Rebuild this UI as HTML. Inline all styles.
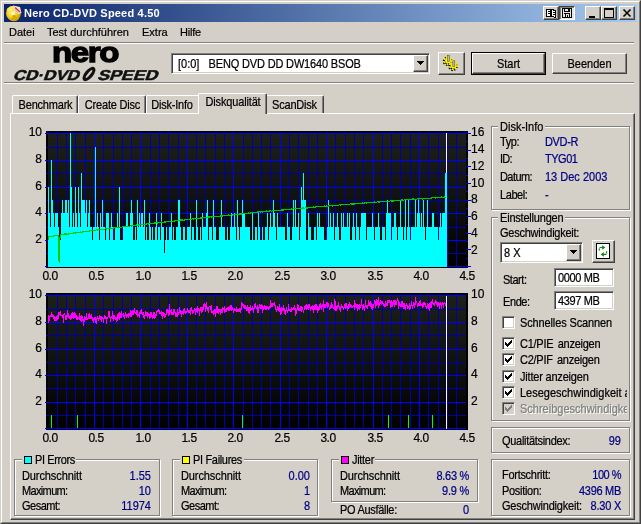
<!DOCTYPE html>
<html><head><meta charset="utf-8"><title>Nero CD-DVD Speed 4.50</title>
<style>
html,body{margin:0;padding:0;background:#d4d0c8;}
body{width:641px;height:524px;overflow:hidden;}
#win{filter:contrast(1);position:relative;width:641px;height:524px;background:#d4d0c8;overflow:hidden;
 font-family:"Liberation Sans",sans-serif;font-size:11px;color:#000;line-height:13px;}
#win *{box-sizing:border-box;}
.a{position:absolute;white-space:nowrap;}
.t{position:absolute;white-space:nowrap;height:13px;line-height:13px;}
.v{position:absolute;white-space:nowrap;height:13px;line-height:13px;color:#000080;text-align:right;}
.n{color:#000080;}
.ax{position:absolute;white-space:nowrap;height:13px;line-height:13px;font-size:12px;}
.axc{text-align:center;width:30px;letter-spacing:-0.5px;}
.axr{text-align:right;width:20px;}
/* frame */
.fr{position:absolute;}
.grp{position:absolute;border:1px solid #808080;box-shadow:1px 1px 0 #fff, inset 1px 1px 0 #fff;}
.gl{position:absolute;background:#d4d0c8;height:13px;line-height:13px;white-space:nowrap;}
.btn{position:absolute;background:#d4d0c8;border:1px solid;border-color:#fff #404040 #404040 #fff;box-shadow:inset -1px -1px 0 #808080;text-align:center;}
.sunk{position:absolute;background:#fff;border:1px solid;border-color:#808080 #fff #fff #808080;box-shadow:inset 1px 1px 0 #404040, inset -1px -1px 0 #d4d0c8;}
.cb{position:absolute;width:13px;height:13px;background:#fff;border:1px solid;border-color:#808080 #fff #fff #808080;box-shadow:inset 1px 1px 0 #404040, inset -1px -1px 0 #d4d0c8;}
.sq{position:absolute;width:8px;height:8px;border:1px solid #000;}
.sep{position:absolute;left:4px;width:630px;height:2px;border-top:1px solid #808080;border-bottom:1px solid #fff;}
.tab{position:absolute;top:95px;height:18px;background:#d4d0c8;border:1px solid;border-color:#fff #404040 transparent #fff;border-bottom:0;border-radius:2px 2px 0 0;box-shadow:inset -1px 0 0 #808080;text-align:center;line-height:17px;padding-top:0px;padding-left:1px;letter-spacing:-0.2px}
.tb{position:absolute;top:6px;width:16px;height:14px;background:#d4d0c8;border:1px solid;border-color:#fff #404040 #404040 #fff;box-shadow:inset -1px -1px 0 #808080;}

.t,.v,.sy,.gl{transform:translateY(1px) scaleY(1.12);transform-origin:0 10px;}
span.sy{display:inline-block;}
.t,.v,.sy,.gl,.ax{-webkit-text-stroke:0.2px currentColor;}
#m1,#m2,#m3,#m4{-webkit-text-stroke:0.2px currentColor;}

</style></head><body>
<div id="win">
<!-- window frame -->
<div class="fr" style="left:0;top:0;width:641px;height:524px;border:1px solid;border-color:#d4d0c8 #404040 #404040 #d4d0c8;"></div>
<div class="fr" style="left:1px;top:1px;width:639px;height:522px;border:1px solid;border-color:#fff #808080 #808080 #fff;"></div>
<!-- title bar -->
<div class="a" style="left:4px;top:4px;width:633px;height:18px;background:linear-gradient(to right,#0a246a,#a6caf0);"></div>
<svg class="a" style="left:5px;top:4px" width="18" height="18" viewBox="0 0 18 18">
 <defs><radialGradient id="dg" cx="0.4" cy="0.45" r="0.6"><stop offset="0" stop-color="#fff6a0"/><stop offset="0.5" stop-color="#f4d21c"/><stop offset="1" stop-color="#c89600"/></radialGradient></defs>
 <circle cx="8.5" cy="9.5" r="7.5" fill="url(#dg)"/>
 <path d="M8.5 9.5 L1.5 6 A7.5 7.5 0 0 1 8 2Z" fill="#ffe860"/>
 <path d="M8.5 9.5 L14 15 A7.5 7.5 0 0 1 6 16.5Z" fill="#d8a800"/>
 <circle cx="8.5" cy="9.5" r="1.6" fill="#fff8d0"/>
 <path d="M8 1.5 L15 3 L16.5 9 L13 10 L9 7Z" fill="#e8e4e0"/>
 <path d="M10 3.5 L15 8" stroke="#e03010" stroke-width="1.3"/>
 <path d="M9.5 5 L13 9" stroke="#f0a090" stroke-width="1"/>
</svg>
<div class="a" style="left:24px;top:6px;color:#fff;font-weight:bold;font-size:11px;line-height:14px;letter-spacing:0.2px" id="title">Nero CD-DVD Speed 4.50</div>
<!-- title buttons -->
<div class="tb" style="left:543px"></div>
<div class="tb" style="left:559px;border-color:#404040 #fff #fff #404040;box-shadow:inset 1px 1px 0 #808080;background:#e8e6e0"></div>
<div class="tb" style="left:585px"></div>
<div class="tb" style="left:601px"></div>
<div class="tb" style="left:619px"></div>
<svg class="a" style="left:543px;top:6px" width="93" height="14" viewBox="0 0 93 14" shape-rendering="crispEdges">
 <!-- book icon -->
 <path d="M3.5 3.5 H7.5 V10.5 H3.5Z M8.5 3.5 L12.5 4.5 V11.5 L8.5 10.5Z" fill="#fff" stroke="#000" stroke-width="1"/>
 <rect x="5" y="5" width="2" height="1" fill="#000"/><rect x="10" y="6" width="2" height="1" fill="#000"/>
 <rect x="5" y="7" width="2" height="1" fill="#000"/><rect x="10" y="8" width="2" height="1" fill="#000"/>
 <!-- floppy -->
 <rect x="19.5" y="2.5" width="9" height="9" fill="#e8e6e0" stroke="#000" stroke-width="1"/>
 <rect x="21" y="3" width="6" height="3" fill="#000"/><rect x="22" y="3" width="3" height="2" fill="#e8e6e0"/>
 <rect x="21" y="7" width="6" height="1" fill="#000"/>
 <rect x="22" y="8" width="1" height="3" fill="#000"/><rect x="26" y="8" width="1" height="3" fill="#000"/><rect x="24" y="9" width="1" height="2" fill="#000"/>
 <!-- min -->
 <rect x="46" y="10" width="6" height="2" fill="#000"/>
 <!-- max -->
 <rect x="61" y="2" width="9" height="9" fill="none" stroke="#000" stroke-width="1" transform="translate(0.5,0.5)"/>
 <rect x="61" y="2" width="10" height="2" fill="#000"/>
 <!-- close -->
 <g shape-rendering="auto"><path d="M80.5 3.5 L87.5 10.5 M87.5 3.5 L80.5 10.5" stroke="#000" stroke-width="1.6"/></g>
</svg>
<!-- menu -->
<div class="a" style="left:9px;top:25px;line-height:14px;" id="m1">Datei</div>
<div class="a" style="left:47px;top:25px;line-height:14px;" id="m2">Test durchführen</div>
<div class="a" style="left:142px;top:25px;line-height:14px;" id="m3">Extra</div>
<div class="a" style="left:180px;top:25px;line-height:14px;letter-spacing:-0.2px" id="m4">Hilfe</div>
<div class="sep" style="top:42px"></div>
<!-- logo -->
<svg class="a" style="left:10px;top:44px" width="152" height="38" viewBox="0 0 152 38">
 <g transform="translate(42,17.6) scale(1.17,1)"><text id="lg1" x="0" y="0" font-family="Liberation Sans, sans-serif" font-weight="bold" font-size="28.3" fill="#000" stroke="#000" stroke-width="1.3" letter-spacing="-1.2">nero</text></g>
 <g transform="translate(2.5,36) skewX(-20)" stroke="#111" stroke-width="0.5"><text id="lg2" x="0" y="0" font-family="Liberation Sans, sans-serif" font-weight="bold" font-size="14.2" fill="#111" textLength="66" lengthAdjust="spacingAndGlyphs">CD·DVD</text>
 <text id="lg3" x="84.5" y="0" font-family="Liberation Sans, sans-serif" font-weight="bold" font-size="14.2" fill="#111" textLength="60" lengthAdjust="spacingAndGlyphs">SPEED</text></g>
 <ellipse cx="79" cy="30" rx="4.3" ry="8.6" transform="rotate(40 79 30)" fill="#111"/>
 <ellipse cx="79" cy="30" rx="1" ry="5" transform="rotate(40 79 30)" fill="#d4d0c8"/>
</svg>
<!-- drive combo -->
<div class="sunk" style="left:171px;top:53px;width:259px;height:21px"></div>
<div class="a sy" style="left:178px;top:57px;" id="drv">[0:0]&nbsp;&nbsp;&nbsp;<span style="letter-spacing:-0.16px">BENQ DVD DD DW1640 BSOB</span></div>
<div class="btn" style="left:413px;top:55px;width:15px;height:17px"></div>
<svg class="a" style="left:417px;top:61px" width="7" height="4" viewBox="0 0 7 4" shape-rendering="crispEdges"><path d="M0 0H7L3.5 4Z" fill="#000"/></svg>
<!-- icon button -->
<div class="btn" style="left:438px;top:52px;width:27px;height:23px"></div>
<svg class="a" style="left:440px;top:53px" width="24" height="21" viewBox="0 0 24 21">
 <g transform="translate(7.6,8.2)"><circle cx="0" cy="0" r="3.1" fill="#000"/><circle cx="0" cy="0" r="3.9" fill="none" stroke="#000" stroke-width="1.8" stroke-dasharray="1.55 1.5"/></g>
 <g transform="translate(13,13.4)"><circle cx="0" cy="0" r="3.1" fill="#000"/><circle cx="0" cy="0" r="3.9" fill="none" stroke="#000" stroke-width="1.8" stroke-dasharray="1.55 1.5"/></g>
 <g transform="translate(8.2,7.2)"><circle cx="0" cy="0" r="3.1" fill="#f8f000"/><circle cx="0" cy="0" r="3.9" fill="none" stroke="#f8f000" stroke-width="1.8" stroke-dasharray="1.55 1.5"/></g>
 <g transform="translate(13.6,12.4)"><circle cx="0" cy="0" r="3.1" fill="#f8f000"/><circle cx="0" cy="0" r="3.9" fill="none" stroke="#f8f000" stroke-width="1.8" stroke-dasharray="1.55 1.5"/></g>
 <rect x="7.4" y="2.6" width="2" height="5.8" fill="#b8b8d0" stroke="#404050" stroke-width="0.5"/>
 <rect x="12.8" y="7.8" width="2" height="5.8" fill="#b8b8d0" stroke="#404050" stroke-width="0.5"/>
</svg>
<!-- Start button (default) -->
<div class="a" style="left:471px;top:52px;width:75px;height:23px;border:1px solid #000"></div>
<div class="btn" style="left:472px;top:53px;width:73px;height:21px;line-height:18px" id="bstart"><span class="sy">Start</span></div>
<div class="btn" style="left:552px;top:53px;width:75px;height:21px;line-height:18px" id="bend"><span class="sy">Beenden</span></div>
<div class="sep" style="top:82px"></div>
<!-- tabs -->
<div class="tab" style="left:12px;width:66px" id="tb1"><span class="sy">Benchmark</span></div>
<div class="tab" style="left:78px;width:68px" id="tb2"><span class="sy">Create Disc</span></div>
<div class="tab" style="left:146px;width:55px;padding-right:4px" id="tb3"><span class="sy">Disk-Info</span></div>
<div class="tab" style="left:265px;width:59px;padding-left:0px" id="tb5"><span class="sy">ScanDisk</span></div>
<!-- tab panel -->
<div class="a" style="left:10px;top:113px;width:625px;height:407px;border:1px solid;border-color:#fff #404040 #404040 #fff;box-shadow:inset -1px -1px 0 #808080"></div>
<div class="tab" style="left:198px;top:93px;width:69px;height:21px;line-height:15px;z-index:2;letter-spacing:-0.15px" id="tb4"><span class="sy">Diskqualität</span></div>
<svg width="641" height="524" viewBox="0 0 641 524" style="position:absolute;left:0;top:0" shape-rendering="crispEdges">
<defs><linearGradient id="bg" x1="0" y1="0" x2="0" y2="1"><stop offset="0" stop-color="#1d1f1b"/><stop offset="0.5" stop-color="#10120f"/><stop offset="1" stop-color="#000"/></linearGradient></defs>
<rect x="46" y="131" width="422" height="137" fill="#000"/>
<rect x="48" y="133" width="418" height="134" fill="url(#bg)"/>
<rect x="57" y="133" width="1" height="134" fill="#0000a6"/>
<rect x="66" y="133" width="1" height="134" fill="#0000a6"/>
<rect x="75" y="133" width="1" height="134" fill="#0000a6"/>
<rect x="85" y="133" width="1" height="134" fill="#0000a6"/>
<rect x="94" y="133" width="1" height="134" fill="#00f"/>
<rect x="103" y="133" width="1" height="134" fill="#0000a6"/>
<rect x="113" y="133" width="1" height="134" fill="#0000a6"/>
<rect x="122" y="133" width="1" height="134" fill="#0000a6"/>
<rect x="131" y="133" width="1" height="134" fill="#0000a6"/>
<rect x="140" y="133" width="1" height="134" fill="#00f"/>
<rect x="150" y="133" width="1" height="134" fill="#0000a6"/>
<rect x="159" y="133" width="1" height="134" fill="#0000a6"/>
<rect x="168" y="133" width="1" height="134" fill="#0000a6"/>
<rect x="178" y="133" width="1" height="134" fill="#0000a6"/>
<rect x="187" y="133" width="1" height="134" fill="#00f"/>
<rect x="196" y="133" width="1" height="134" fill="#0000a6"/>
<rect x="205" y="133" width="1" height="134" fill="#0000a6"/>
<rect x="215" y="133" width="1" height="134" fill="#0000a6"/>
<rect x="224" y="133" width="1" height="134" fill="#0000a6"/>
<rect x="233" y="133" width="1" height="134" fill="#00f"/>
<rect x="243" y="133" width="1" height="134" fill="#0000a6"/>
<rect x="252" y="133" width="1" height="134" fill="#0000a6"/>
<rect x="261" y="133" width="1" height="134" fill="#0000a6"/>
<rect x="270" y="133" width="1" height="134" fill="#0000a6"/>
<rect x="280" y="133" width="1" height="134" fill="#00f"/>
<rect x="289" y="133" width="1" height="134" fill="#0000a6"/>
<rect x="298" y="133" width="1" height="134" fill="#0000a6"/>
<rect x="308" y="133" width="1" height="134" fill="#0000a6"/>
<rect x="317" y="133" width="1" height="134" fill="#0000a6"/>
<rect x="326" y="133" width="1" height="134" fill="#00f"/>
<rect x="335" y="133" width="1" height="134" fill="#0000a6"/>
<rect x="345" y="133" width="1" height="134" fill="#0000a6"/>
<rect x="354" y="133" width="1" height="134" fill="#0000a6"/>
<rect x="363" y="133" width="1" height="134" fill="#0000a6"/>
<rect x="373" y="133" width="1" height="134" fill="#00f"/>
<rect x="382" y="133" width="1" height="134" fill="#0000a6"/>
<rect x="391" y="133" width="1" height="134" fill="#0000a6"/>
<rect x="400" y="133" width="1" height="134" fill="#0000a6"/>
<rect x="410" y="133" width="1" height="134" fill="#0000a6"/>
<rect x="419" y="133" width="1" height="134" fill="#00f"/>
<rect x="428" y="133" width="1" height="134" fill="#0000a6"/>
<rect x="438" y="133" width="1" height="134" fill="#0000a6"/>
<rect x="447" y="133" width="1" height="134" fill="#0000a6"/>
<rect x="456" y="133" width="1" height="134" fill="#0000a6"/>
<rect x="45" y="266" width="421" height="1" fill="#00f"/>
<rect x="46" y="253" width="420" height="1" fill="#0000a6"/>
<rect x="45" y="240" width="421" height="1" fill="#00f"/>
<rect x="46" y="227" width="420" height="1" fill="#0000a6"/>
<rect x="45" y="213" width="421" height="1" fill="#00f"/>
<rect x="46" y="200" width="420" height="1" fill="#0000a6"/>
<rect x="45" y="187" width="421" height="1" fill="#00f"/>
<rect x="46" y="173" width="420" height="1" fill="#0000a6"/>
<rect x="45" y="160" width="421" height="1" fill="#00f"/>
<rect x="46" y="147" width="420" height="1" fill="#0000a6"/>
<rect x="45" y="133" width="421" height="1" fill="#00f"/>
<path d="M48 267V187H49V213H50V227H51V160H52V200H53V213H54V227H55V213H56V213H57V213H58V227H59V240H60V240H61V213H62V200H63V213H64V213H65V200H66V200H67V213H68V200H69V227H70V133H71V187H72V227H73V213H74V227H75V187H76V213H77V227H78V187H79V213H80V227H81V173H82V200H83V200H84V200H85V213H86V200H87V227H88V213H89V200H90V227H91V227H92V240H93V227H94V227H95V147H96V227H97V213H98V227H99V240H100V213H101V227H102V200H103V227H104V227H105V240H106V213H107V213H108V213H109V240H110V227H111V213H112V227H113V240H114V240H115V227H116V227H117V213H118V227H119V187H120V240H121V240H122V240H123V227H124V227H125V227H126V213H127V213H128V227H129V227H130V213H131V200H132V213H133V240H134V240H135V227H136V240H137V200H138V227H139V213H140V227H141V213H142V213H143V227H144V200H145V240H146V227H147V240H148V240H149V213H150V227H151V240H152V227H153V240H154V240H155V227H156V213H157V240H158V227H159V227H160V240H161V213H162V227H163V227H164V253H165V240H166V227H167V240H168V240H169V227H170V227H171V213H172V240H173V227H174V240H175V240H176V227H177V227H178V200H179V200H180V227H181V240H182V240H183V227H184V227H185V240H186V240H187V227H188V227H189V227H190V213H191V240H192V227H193V227H194V240H195V240H196V200H197V227H198V240H199V240H200V227H201V240H202V213H203V227H204V227H205V227H206V213H207V200H208V240H209V227H210V227H211V227H212V240H213V200H214V227H215V227H216V240H217V240H218V240H219V227H220V227H221V200H222V227H223V227H224V227H225V240H226V240H227V227H228V240H229V240H230V227H231V213H232V227H233V227H234V213H235V227H236V240H237V200H238V227H239V240H240V227H241V227H242V200H243V213H244V213H245V227H246V227H247V227H248V227H249V227H250V240H251V240H252V213H253V240H254V240H255V227H256V227H257V240H258V213H259V227H260V240H261V240H262V227H263V240H264V240H265V227H266V227H267V213H268V240H269V227H270V213H271V227H272V227H273V200H274V213H275V227H276V240H277V213H278V227H279V227H280V227H281V227H282V227H283V227H284V227H285V240H286V240H287V213H288V227H289V227H290V240H291V240H292V227H293V200H294V227H295V200H296V227H297V227H298V213H299V240H300V227H301V187H302V200H303V173H304V200H305V200H306V240H307V240H308V213H309V227H310V227H311V240H312V240H313V240H314V227H315V227H316V240H317V213H318V227H319V213H320V227H321V227H322V227H323V227H324V240H325V240H326V240H327V227H328V200H329V227H330V213H331V227H332V227H333V213H334V240H335V227H336V227H337V213H338V227H339V240H340V240H341V213H342V227H343V213H344V227H345V227H346V227H347V213H348V227H349V213H350V240H351V240H352V227H353V213H354V227H355V240H356V213H357V227H358V227H359V240H360V227H361V213H362V213H363V213H364V213H365V213H366V240H367V227H368V227H369V227H370V227H371V227H372V213H373V227H374V240H375V227H376V227H377V227H378V213H379V227H380V240H381V240H382V227H383V227H384V227H385V240H386V213H387V200H388V213H389V213H390V213H391V240H392V227H393V227H394V213H395V213H396V227H397V240H398V227H399V227H400V200H401V227H402V227H403V240H404V227H405V200H406V240H407V227H408V200H409V227H410V240H411V227H412V227H413V227H414V227H415V200H416V227H417V213H418V200H419V213H420V227H421V213H422V227H423V200H424V227H425V240H426V227H427V200H428V227H429V227H430V227H431V227H432V213H433V213H434V227H435V227H436V227H437V227H438V240H439V227H440V213H441V227H442V213H443V213H444V213H445V173H446V173H447V267Z" fill="#0ff"/>
<rect x="466" y="266" width="5" height="1" fill="#00f"/>
<rect x="466" y="258" width="2" height="1" fill="#00f"/>
<rect x="466" y="249" width="5" height="1" fill="#00f"/>
<rect x="466" y="241" width="2" height="1" fill="#00f"/>
<rect x="466" y="233" width="5" height="1" fill="#00f"/>
<rect x="466" y="224" width="2" height="1" fill="#00f"/>
<rect x="466" y="216" width="5" height="1" fill="#00f"/>
<rect x="466" y="208" width="2" height="1" fill="#00f"/>
<rect x="466" y="200" width="5" height="1" fill="#00f"/>
<rect x="466" y="191" width="2" height="1" fill="#00f"/>
<rect x="466" y="183" width="5" height="1" fill="#00f"/>
<rect x="466" y="175" width="2" height="1" fill="#00f"/>
<rect x="466" y="166" width="5" height="1" fill="#00f"/>
<rect x="466" y="158" width="2" height="1" fill="#00f"/>
<rect x="466" y="150" width="5" height="1" fill="#00f"/>
<rect x="466" y="141" width="2" height="1" fill="#00f"/>
<rect x="466" y="133" width="5" height="1" fill="#00f"/>
<rect x="446" y="133" width="1" height="40" fill="#fff"/>
<g shape-rendering="crispEdges"><polyline fill="none" stroke="#00c800" stroke-width="1.2" points="48.5,240.0 48.5,236.6 49.5,236.5 50.5,236.4 51.5,236.4 52.5,236.1 53.5,236.1 54.5,235.4 55.5,235.5 56.5,235.7 57.5,235.4 58.5,235.4 58.7,250.0 59.2,263.0 59.6,240.0 60.5,234.9 61.5,234.6 62.5,234.6 63.5,234.5 64.5,234.0 65.5,234.0 66.5,233.9 67.5,234.2 68.5,234.0 69.5,233.5 70.5,233.7 71.5,233.2 72.5,233.3 73.5,232.9 74.5,232.7 75.5,233.1 76.5,232.6 77.5,232.4 78.5,232.8 79.5,232.6 80.5,232.1 81.5,232.4 82.5,232.0 83.5,231.9 84.5,231.5 85.5,231.8 86.5,231.5 87.5,231.6 88.5,231.4 89.5,230.9 90.5,230.8 91.5,230.6 92.5,230.4 93.5,230.3 94.5,230.3 95.5,230.3 96.5,229.8 97.5,230.1 98.5,229.8 99.5,229.7 100.5,229.8 101.5,229.5 102.5,229.3 103.5,229.2 104.5,229.3 105.5,228.7 106.5,229.2 107.5,228.5 108.5,228.8 109.5,228.7 110.5,228.1 111.5,228.4 112.5,228.1 113.5,228.1 114.5,227.6 115.5,227.5 116.5,227.5 117.5,227.8 118.5,227.2 119.5,227.4 120.5,227.4 121.5,227.3 122.5,226.8 123.5,226.7 124.5,226.7 125.5,226.7 126.5,226.2 127.5,226.5 128.5,226.4 129.5,226.3 130.5,225.7 131.5,226.1 132.5,225.5 133.5,225.5 134.5,225.5 135.5,225.6 136.5,225.1 137.5,225.4 138.5,225.0 139.5,224.8 140.5,224.6 141.5,224.4 142.5,224.3 143.5,224.2 144.5,224.4 145.5,224.5 146.5,223.8 147.5,223.7 148.5,224.1 149.5,223.7 150.5,223.5 151.5,223.3 152.5,223.4 153.5,223.4 154.5,223.1 155.5,223.0 156.5,222.6 157.5,223.0 158.5,222.4 159.5,222.5 160.5,222.6 161.5,222.1 162.5,222.3 163.5,222.4 164.5,222.1 165.5,222.0 166.5,221.5 167.5,221.6 168.5,221.3 169.5,221.6 170.5,221.2 171.5,221.2 172.5,221.4 173.5,221.2 174.5,221.1 175.5,220.7 176.5,220.6 177.5,220.7 178.5,220.4 179.5,220.2 180.5,220.1 181.5,219.9 182.5,219.9 183.5,220.2 184.5,220.0 185.5,219.7 186.5,219.5 187.5,219.3 188.5,219.1 189.5,219.1 190.5,219.3 191.5,219.2 192.5,218.8 193.5,219.0 194.5,218.8 195.5,218.7 196.5,218.6 197.5,218.5 198.5,218.2 199.5,218.3 200.5,217.9 201.5,217.9 202.5,218.0 203.5,217.8 204.5,217.5 205.5,217.8 206.5,217.5 207.5,217.3 208.5,216.9 209.5,217.1 210.5,216.8 211.5,217.0 212.5,216.8 213.5,216.9 214.5,216.7 215.5,216.6 216.5,216.3 217.5,216.3 218.5,216.3 219.5,216.3 220.5,215.9 221.5,216.1 222.5,216.0 223.5,215.8 224.5,215.8 225.5,215.7 226.5,215.4 227.5,215.3 228.5,214.9 229.5,215.2 230.5,215.2 231.5,214.8 232.5,214.9 233.5,214.8 234.5,214.7 235.5,214.2 236.5,214.5 237.5,214.3 238.5,214.2 239.5,214.0 240.5,214.0 241.5,214.0 242.5,213.8 243.5,213.8 244.5,213.3 245.5,213.3 246.5,213.3 247.5,213.3 248.5,213.0 249.5,213.2 250.5,213.0 251.5,212.6 252.5,212.8 253.5,212.5 254.5,212.3 255.5,212.3 256.5,212.3 257.5,212.1 258.5,212.0 259.5,211.8 260.5,212.0 261.5,211.8 262.5,211.9 263.5,211.8 264.5,211.5 265.5,211.8 266.5,211.1 267.5,211.3 268.5,211.1 269.5,211.1 270.5,210.8 271.5,211.2 272.5,210.8 273.5,210.5 274.5,210.8 275.5,210.4 276.5,210.5 277.5,210.3 278.5,210.4 279.5,210.5 280.5,210.3 281.5,210.0 282.5,210.1 283.5,209.9 284.5,209.7 285.5,209.5 286.5,209.6 287.5,209.5 288.5,209.7 289.5,209.6 290.5,209.3 291.5,209.0 292.5,209.3 293.5,208.7 294.5,208.6 295.5,208.8 296.5,208.8 297.5,208.4 298.5,208.6 299.5,208.7 300.5,208.3 301.5,208.2 302.5,208.0 303.5,207.9 304.5,208.3 305.5,207.8 306.5,208.1 307.5,208.0 308.5,207.7 309.5,207.4 310.5,207.7 311.5,207.4 312.5,207.2 313.5,207.1 314.5,207.4 315.5,207.0 316.5,206.8 317.5,206.8 318.5,206.5 319.5,206.8 320.5,206.6 321.5,206.4 322.5,206.6 323.5,206.5 324.5,206.0 325.5,206.2 326.5,206.0 327.5,206.3 328.5,206.1 329.5,205.7 330.5,205.6 331.5,205.5 332.5,205.9 333.5,205.4 334.5,205.5 335.5,205.3 336.5,205.3 337.5,205.2 338.5,205.2 339.5,204.8 340.5,205.1 341.5,204.7 342.5,204.8 343.5,204.6 344.5,204.5 345.5,204.5 346.5,204.4 347.5,204.3 348.5,204.4 349.5,204.2 350.5,203.8 351.5,203.9 352.5,203.9 353.5,204.1 354.5,204.0 355.5,203.7 356.5,203.3 357.5,203.7 358.5,203.4 359.5,203.4 360.5,203.4 361.5,203.3 362.5,203.1 363.5,203.3 364.5,202.9 365.5,202.8 366.5,203.0 367.5,202.6 368.5,202.6 369.5,202.8 370.5,202.3 371.5,202.6 372.5,202.5 373.5,202.2 374.5,202.1 375.5,202.3 376.5,202.3 377.5,201.8 378.5,201.9 379.5,201.9 380.5,201.7 381.5,201.6 382.5,201.4 383.5,201.6 384.5,201.6 385.5,201.1 386.5,201.1 387.5,201.4 388.5,201.3 389.5,201.2 390.5,200.7 391.5,201.0 392.5,201.1 393.5,201.1 394.5,200.8 395.5,200.3 396.5,200.7 397.5,200.3 398.5,200.5 399.5,200.6 400.5,200.4 401.5,200.0 402.5,200.0 403.5,200.3 404.5,199.7 405.5,199.9 406.5,199.8 407.5,199.5 408.5,199.7 409.5,199.3 410.5,199.3 411.5,199.4 412.5,199.1 413.5,199.0 414.5,199.3 415.5,199.3 416.5,199.3 417.5,198.8 418.5,198.9 419.5,198.8 420.5,198.9 421.5,198.7 422.5,198.9 423.5,198.5 424.5,198.2 425.5,198.6 426.5,198.2 427.5,198.4 428.5,198.2 429.5,198.4 430.5,198.1 431.5,198.1 432.5,197.8 433.5,197.9 434.5,197.7 435.5,197.9 436.5,197.7 437.5,197.4 438.5,197.4 439.5,197.4 440.5,197.5 441.5,197.1 442.5,197.4 443.5,197.3 444.5,196.9 445.5,197.2 446.5,196.7"/></g>
<rect x="46" y="293" width="422" height="137" fill="#000"/>
<rect x="48" y="295" width="418" height="134" fill="url(#bg)"/>
<rect x="57" y="295" width="1" height="134" fill="#0000a6"/>
<rect x="66" y="295" width="1" height="134" fill="#0000a6"/>
<rect x="75" y="295" width="1" height="134" fill="#0000a6"/>
<rect x="85" y="295" width="1" height="134" fill="#0000a6"/>
<rect x="94" y="295" width="1" height="134" fill="#00f"/>
<rect x="103" y="295" width="1" height="134" fill="#0000a6"/>
<rect x="113" y="295" width="1" height="134" fill="#0000a6"/>
<rect x="122" y="295" width="1" height="134" fill="#0000a6"/>
<rect x="131" y="295" width="1" height="134" fill="#0000a6"/>
<rect x="140" y="295" width="1" height="134" fill="#00f"/>
<rect x="150" y="295" width="1" height="134" fill="#0000a6"/>
<rect x="159" y="295" width="1" height="134" fill="#0000a6"/>
<rect x="168" y="295" width="1" height="134" fill="#0000a6"/>
<rect x="178" y="295" width="1" height="134" fill="#0000a6"/>
<rect x="187" y="295" width="1" height="134" fill="#00f"/>
<rect x="196" y="295" width="1" height="134" fill="#0000a6"/>
<rect x="205" y="295" width="1" height="134" fill="#0000a6"/>
<rect x="215" y="295" width="1" height="134" fill="#0000a6"/>
<rect x="224" y="295" width="1" height="134" fill="#0000a6"/>
<rect x="233" y="295" width="1" height="134" fill="#00f"/>
<rect x="243" y="295" width="1" height="134" fill="#0000a6"/>
<rect x="252" y="295" width="1" height="134" fill="#0000a6"/>
<rect x="261" y="295" width="1" height="134" fill="#0000a6"/>
<rect x="270" y="295" width="1" height="134" fill="#0000a6"/>
<rect x="280" y="295" width="1" height="134" fill="#00f"/>
<rect x="289" y="295" width="1" height="134" fill="#0000a6"/>
<rect x="298" y="295" width="1" height="134" fill="#0000a6"/>
<rect x="308" y="295" width="1" height="134" fill="#0000a6"/>
<rect x="317" y="295" width="1" height="134" fill="#0000a6"/>
<rect x="326" y="295" width="1" height="134" fill="#00f"/>
<rect x="335" y="295" width="1" height="134" fill="#0000a6"/>
<rect x="345" y="295" width="1" height="134" fill="#0000a6"/>
<rect x="354" y="295" width="1" height="134" fill="#0000a6"/>
<rect x="363" y="295" width="1" height="134" fill="#0000a6"/>
<rect x="373" y="295" width="1" height="134" fill="#00f"/>
<rect x="382" y="295" width="1" height="134" fill="#0000a6"/>
<rect x="391" y="295" width="1" height="134" fill="#0000a6"/>
<rect x="400" y="295" width="1" height="134" fill="#0000a6"/>
<rect x="410" y="295" width="1" height="134" fill="#0000a6"/>
<rect x="419" y="295" width="1" height="134" fill="#00f"/>
<rect x="428" y="295" width="1" height="134" fill="#0000a6"/>
<rect x="438" y="295" width="1" height="134" fill="#0000a6"/>
<rect x="447" y="295" width="1" height="134" fill="#0000a6"/>
<rect x="456" y="295" width="1" height="134" fill="#0000a6"/>
<rect x="45" y="428" width="421" height="1" fill="#00f"/>
<rect x="46" y="415" width="420" height="1" fill="#0000a6"/>
<rect x="45" y="402" width="421" height="1" fill="#00f"/>
<rect x="46" y="388" width="420" height="1" fill="#0000a6"/>
<rect x="45" y="375" width="421" height="1" fill="#00f"/>
<rect x="46" y="362" width="420" height="1" fill="#0000a6"/>
<rect x="45" y="349" width="421" height="1" fill="#00f"/>
<rect x="46" y="335" width="420" height="1" fill="#0000a6"/>
<rect x="45" y="322" width="421" height="1" fill="#00f"/>
<rect x="46" y="309" width="420" height="1" fill="#0000a6"/>
<rect x="45" y="295" width="421" height="1" fill="#00f"/>
<rect x="51" y="415" width="1" height="13" fill="#0f0"/>
<rect x="77" y="415" width="1" height="13" fill="#0f0"/>
<rect x="242" y="415" width="1" height="13" fill="#0f0"/>
<rect x="388" y="415" width="1" height="13" fill="#0f0"/>
<rect x="408" y="415" width="1" height="13" fill="#0f0"/>
<rect x="432" y="415" width="1" height="13" fill="#0f0"/>
<g fill="#f0f"><rect x="48" y="315" width="1" height="8"/><rect x="49" y="316" width="1" height="5"/><rect x="50" y="315" width="1" height="2"/><rect x="51" y="312" width="1" height="5"/><rect x="52" y="314" width="1" height="3"/><rect x="53" y="315" width="1" height="4"/><rect x="54" y="316" width="1" height="5"/><rect x="55" y="317" width="1" height="4"/><rect x="56" y="316" width="1" height="5"/><rect x="57" y="315" width="1" height="5"/><rect x="58" y="312" width="1" height="7"/><rect x="59" y="312" width="1" height="3"/><rect x="60" y="311" width="1" height="5"/><rect x="61" y="315" width="1" height="1"/><rect x="62" y="315" width="1" height="3"/><rect x="63" y="314" width="1" height="9"/><rect x="64" y="313" width="1" height="2"/><rect x="65" y="315" width="1" height="5"/><rect x="66" y="315" width="1" height="5"/><rect x="67" y="310" width="1" height="7"/><rect x="68" y="313" width="1" height="5"/><rect x="69" y="316" width="1" height="3"/><rect x="70" y="315" width="1" height="5"/><rect x="71" y="313" width="1" height="6"/><rect x="72" y="312" width="1" height="6"/><rect x="73" y="313" width="1" height="6"/><rect x="74" y="312" width="1" height="6"/><rect x="75" y="313" width="1" height="5"/><rect x="76" y="315" width="1" height="5"/><rect x="77" y="316" width="1" height="4"/><rect x="78" y="317" width="1" height="2"/><rect x="79" y="313" width="1" height="7"/><rect x="80" y="316" width="1" height="5"/><rect x="81" y="315" width="1" height="7"/><rect x="82" y="316" width="1" height="5"/><rect x="83" y="319" width="1" height="7"/><rect x="84" y="316" width="1" height="6"/><rect x="85" y="317" width="1" height="3"/><rect x="86" y="313" width="1" height="7"/><rect x="87" y="318" width="1" height="2"/><rect x="88" y="314" width="1" height="5"/><rect x="89" y="313" width="1" height="6"/><rect x="90" y="315" width="1" height="4"/><rect x="91" y="314" width="1" height="5"/><rect x="92" y="317" width="1" height="4"/><rect x="93" y="318" width="1" height="5"/><rect x="94" y="317" width="1" height="3"/><rect x="95" y="317" width="1" height="6"/><rect x="96" y="318" width="1" height="6"/><rect x="97" y="316" width="1" height="3"/><rect x="98" y="318" width="1" height="3"/><rect x="99" y="315" width="1" height="4"/><rect x="100" y="316" width="1" height="4"/><rect x="101" y="316" width="1" height="6"/><rect x="102" y="317" width="1" height="2"/><rect x="103" y="318" width="1" height="5"/><rect x="104" y="315" width="1" height="4"/><rect x="105" y="316" width="1" height="3"/><rect x="106" y="317" width="1" height="7"/><rect x="107" y="317" width="1" height="2"/><rect x="108" y="311" width="1" height="6"/><rect x="109" y="311" width="1" height="7"/><rect x="110" y="317" width="1" height="5"/><rect x="111" y="316" width="1" height="2"/><rect x="112" y="311" width="1" height="8"/><rect x="113" y="315" width="1" height="6"/><rect x="114" y="315" width="1" height="4"/><rect x="115" y="317" width="1" height="3"/><rect x="116" y="317" width="1" height="5"/><rect x="117" y="314" width="1" height="7"/><rect x="118" y="313" width="1" height="6"/><rect x="119" y="312" width="1" height="8"/><rect x="120" y="313" width="1" height="5"/><rect x="121" y="311" width="1" height="7"/><rect x="122" y="314" width="1" height="1"/><rect x="123" y="313" width="1" height="4"/><rect x="124" y="315" width="1" height="4"/><rect x="125" y="312" width="1" height="4"/><rect x="126" y="314" width="1" height="4"/><rect x="127" y="314" width="1" height="3"/><rect x="128" y="313" width="1" height="5"/><rect x="129" y="313" width="1" height="3"/><rect x="130" y="310" width="1" height="7"/><rect x="131" y="311" width="1" height="6"/><rect x="132" y="310" width="1" height="5"/><rect x="133" y="310" width="1" height="5"/><rect x="134" y="308" width="1" height="5"/><rect x="135" y="312" width="1" height="2"/><rect x="136" y="310" width="1" height="5"/><rect x="137" y="310" width="1" height="7"/><rect x="138" y="314" width="1" height="2"/><rect x="139" y="312" width="1" height="6"/><rect x="140" y="310" width="1" height="4"/><rect x="141" y="309" width="1" height="5"/><rect x="142" y="312" width="1" height="3"/><rect x="143" y="312" width="1" height="6"/><rect x="144" y="315" width="1" height="4"/><rect x="145" y="311" width="1" height="5"/><rect x="146" y="312" width="1" height="4"/><rect x="147" y="312" width="1" height="6"/><rect x="148" y="313" width="1" height="3"/><rect x="149" y="314" width="1" height="5"/><rect x="150" y="312" width="1" height="6"/><rect x="151" y="312" width="1" height="5"/><rect x="152" y="315" width="1" height="4"/><rect x="153" y="312" width="1" height="6"/><rect x="154" y="312" width="1" height="7"/><rect x="155" y="314" width="1" height="4"/><rect x="156" y="311" width="1" height="5"/><rect x="157" y="310" width="1" height="2"/><rect x="158" y="309" width="1" height="3"/><rect x="159" y="310" width="1" height="4"/><rect x="160" y="312" width="1" height="2"/><rect x="161" y="311" width="1" height="5"/><rect x="162" y="312" width="1" height="7"/><rect x="163" y="312" width="1" height="4"/><rect x="164" y="313" width="1" height="5"/><rect x="165" y="314" width="1" height="3"/><rect x="166" y="309" width="1" height="6"/><rect x="167" y="309" width="1" height="4"/><rect x="168" y="310" width="1" height="6"/><rect x="169" y="304" width="1" height="11"/><rect x="170" y="310" width="1" height="3"/><rect x="171" y="309" width="1" height="6"/><rect x="172" y="312" width="1" height="3"/><rect x="173" y="309" width="1" height="6"/><rect x="174" y="309" width="1" height="4"/><rect x="175" y="312" width="1" height="5"/><rect x="176" y="313" width="1" height="4"/><rect x="177" y="309" width="1" height="8"/><rect x="178" y="312" width="1" height="3"/><rect x="179" y="307" width="1" height="6"/><rect x="180" y="310" width="1" height="4"/><rect x="181" y="311" width="1" height="6"/><rect x="182" y="311" width="1" height="3"/><rect x="183" y="309" width="1" height="6"/><rect x="184" y="308" width="1" height="5"/><rect x="185" y="311" width="1" height="3"/><rect x="186" y="311" width="1" height="2"/><rect x="187" y="308" width="1" height="4"/><rect x="188" y="310" width="1" height="3"/><rect x="189" y="310" width="1" height="3"/><rect x="190" y="308" width="1" height="7"/><rect x="191" y="307" width="1" height="4"/><rect x="192" y="310" width="1" height="4"/><rect x="193" y="310" width="1" height="3"/><rect x="194" y="308" width="1" height="3"/><rect x="195" y="309" width="1" height="6"/><rect x="196" y="308" width="1" height="4"/><rect x="197" y="306" width="1" height="7"/><rect x="198" y="308" width="1" height="3"/><rect x="199" y="309" width="1" height="7"/><rect x="200" y="307" width="1" height="4"/><rect x="201" y="307" width="1" height="6"/><rect x="202" y="307" width="1" height="5"/><rect x="203" y="304" width="1" height="6"/><rect x="204" y="303" width="1" height="4"/><rect x="205" y="304" width="1" height="8"/><rect x="206" y="302" width="1" height="7"/><rect x="207" y="307" width="1" height="4"/><rect x="208" y="307" width="1" height="6"/><rect x="209" y="306" width="1" height="1"/><rect x="210" y="306" width="1" height="4"/><rect x="211" y="305" width="1" height="8"/><rect x="212" y="311" width="1" height="2"/><rect x="213" y="310" width="1" height="5"/><rect x="214" y="309" width="1" height="5"/><rect x="215" y="309" width="1" height="8"/><rect x="216" y="306" width="1" height="7"/><rect x="217" y="306" width="1" height="7"/><rect x="218" y="309" width="1" height="5"/><rect x="219" y="309" width="1" height="3"/><rect x="220" y="309" width="1" height="6"/><rect x="221" y="309" width="1" height="4"/><rect x="222" y="307" width="1" height="6"/><rect x="223" y="308" width="1" height="2"/><rect x="224" y="306" width="1" height="7"/><rect x="225" y="309" width="1" height="3"/><rect x="226" y="308" width="1" height="4"/><rect x="227" y="307" width="1" height="3"/><rect x="228" y="307" width="1" height="4"/><rect x="229" y="306" width="1" height="5"/><rect x="230" y="305" width="1" height="5"/><rect x="231" y="305" width="1" height="6"/><rect x="232" y="307" width="1" height="3"/><rect x="233" y="309" width="1" height="4"/><rect x="234" y="308" width="1" height="3"/><rect x="235" y="309" width="1" height="2"/><rect x="236" y="307" width="1" height="5"/><rect x="237" y="309" width="1" height="3"/><rect x="238" y="309" width="1" height="3"/><rect x="239" y="308" width="1" height="4"/><rect x="240" y="308" width="1" height="5"/><rect x="241" y="302" width="1" height="8"/><rect x="242" y="303" width="1" height="3"/><rect x="243" y="304" width="1" height="4"/><rect x="244" y="305" width="1" height="4"/><rect x="245" y="305" width="1" height="4"/><rect x="246" y="307" width="1" height="4"/><rect x="247" y="305" width="1" height="6"/><rect x="248" y="307" width="1" height="6"/><rect x="249" y="307" width="1" height="7"/><rect x="250" y="305" width="1" height="6"/><rect x="251" y="308" width="1" height="2"/><rect x="252" y="306" width="1" height="4"/><rect x="253" y="308" width="1" height="5"/><rect x="254" y="304" width="1" height="5"/><rect x="255" y="303" width="1" height="5"/><rect x="256" y="307" width="1" height="2"/><rect x="257" y="305" width="1" height="8"/><rect x="258" y="307" width="1" height="6"/><rect x="259" y="304" width="1" height="4"/><rect x="260" y="305" width="1" height="4"/><rect x="261" y="304" width="1" height="5"/><rect x="262" y="305" width="1" height="8"/><rect x="263" y="306" width="1" height="4"/><rect x="264" y="305" width="1" height="4"/><rect x="265" y="306" width="1" height="4"/><rect x="266" y="306" width="1" height="4"/><rect x="267" y="306" width="1" height="3"/><rect x="268" y="307" width="1" height="3"/><rect x="269" y="306" width="1" height="3"/><rect x="270" y="300" width="1" height="8"/><rect x="271" y="303" width="1" height="4"/><rect x="272" y="303" width="1" height="4"/><rect x="273" y="303" width="1" height="2"/><rect x="274" y="302" width="1" height="4"/><rect x="275" y="305" width="1" height="5"/><rect x="276" y="309" width="1" height="3"/><rect x="277" y="306" width="1" height="4"/><rect x="278" y="307" width="1" height="4"/><rect x="279" y="304" width="1" height="8"/><rect x="280" y="308" width="1" height="7"/><rect x="281" y="307" width="1" height="7"/><rect x="282" y="308" width="1" height="3"/><rect x="283" y="305" width="1" height="6"/><rect x="284" y="308" width="1" height="6"/><rect x="285" y="310" width="1" height="5"/><rect x="286" y="307" width="1" height="4"/><rect x="287" y="310" width="1" height="3"/><rect x="288" y="304" width="1" height="7"/><rect x="289" y="309" width="1" height="2"/><rect x="290" y="309" width="1" height="3"/><rect x="291" y="307" width="1" height="5"/><rect x="292" y="308" width="1" height="2"/><rect x="293" y="307" width="1" height="3"/><rect x="294" y="305" width="1" height="5"/><rect x="295" y="308" width="1" height="8"/><rect x="296" y="309" width="1" height="5"/><rect x="297" y="304" width="1" height="6"/><rect x="298" y="305" width="1" height="6"/><rect x="299" y="308" width="1" height="3"/><rect x="300" y="306" width="1" height="5"/><rect x="301" y="306" width="1" height="6"/><rect x="302" y="307" width="1" height="3"/><rect x="303" y="310" width="1" height="3"/><rect x="304" y="306" width="1" height="4"/><rect x="305" y="305" width="1" height="4"/><rect x="306" y="304" width="1" height="6"/><rect x="307" y="305" width="1" height="4"/><rect x="308" y="304" width="1" height="6"/><rect x="309" y="304" width="1" height="4"/><rect x="310" y="307" width="1" height="4"/><rect x="311" y="306" width="1" height="3"/><rect x="312" y="305" width="1" height="5"/><rect x="313" y="306" width="1" height="7"/><rect x="314" y="305" width="1" height="5"/><rect x="315" y="304" width="1" height="6"/><rect x="316" y="304" width="1" height="6"/><rect x="317" y="306" width="1" height="7"/><rect x="318" y="307" width="1" height="4"/><rect x="319" y="304" width="1" height="6"/><rect x="320" y="303" width="1" height="5"/><rect x="321" y="305" width="1" height="5"/><rect x="322" y="304" width="1" height="3"/><rect x="323" y="300" width="1" height="12"/><rect x="324" y="304" width="1" height="4"/><rect x="325" y="304" width="1" height="4"/><rect x="326" y="302" width="1" height="4"/><rect x="327" y="302" width="1" height="6"/><rect x="328" y="303" width="1" height="4"/><rect x="329" y="307" width="1" height="3"/><rect x="330" y="305" width="1" height="4"/><rect x="331" y="302" width="1" height="6"/><rect x="332" y="304" width="1" height="4"/><rect x="333" y="307" width="1" height="2"/><rect x="334" y="299" width="1" height="11"/><rect x="335" y="301" width="1" height="10"/><rect x="336" y="306" width="1" height="5"/><rect x="337" y="305" width="1" height="4"/><rect x="338" y="302" width="1" height="5"/><rect x="339" y="306" width="1" height="4"/><rect x="340" y="307" width="1" height="5"/><rect x="341" y="304" width="1" height="4"/><rect x="342" y="306" width="1" height="2"/><rect x="343" y="307" width="1" height="3"/><rect x="344" y="304" width="1" height="4"/><rect x="345" y="303" width="1" height="6"/><rect x="346" y="303" width="1" height="5"/><rect x="347" y="306" width="1" height="5"/><rect x="348" y="304" width="1" height="5"/><rect x="349" y="302" width="1" height="6"/><rect x="350" y="304" width="1" height="3"/><rect x="351" y="305" width="1" height="3"/><rect x="352" y="306" width="1" height="2"/><rect x="353" y="305" width="1" height="2"/><rect x="354" y="300" width="1" height="10"/><rect x="355" y="303" width="1" height="4"/><rect x="356" y="304" width="1" height="4"/><rect x="357" y="304" width="1" height="7"/><rect x="358" y="305" width="1" height="4"/><rect x="359" y="304" width="1" height="6"/><rect x="360" y="305" width="1" height="3"/><rect x="361" y="299" width="1" height="7"/><rect x="362" y="305" width="1" height="5"/><rect x="363" y="304" width="1" height="5"/><rect x="364" y="306" width="1" height="5"/><rect x="365" y="300" width="1" height="7"/><rect x="366" y="305" width="1" height="3"/><rect x="367" y="305" width="1" height="4"/><rect x="368" y="300" width="1" height="6"/><rect x="369" y="302" width="1" height="4"/><rect x="370" y="301" width="1" height="6"/><rect x="371" y="303" width="1" height="6"/><rect x="372" y="304" width="1" height="6"/><rect x="373" y="304" width="1" height="4"/><rect x="374" y="300" width="1" height="4"/><rect x="375" y="301" width="1" height="7"/><rect x="376" y="299" width="1" height="7"/><rect x="377" y="300" width="1" height="5"/><rect x="378" y="297" width="1" height="11"/><rect x="379" y="302" width="1" height="4"/><rect x="380" y="300" width="1" height="4"/><rect x="381" y="301" width="1" height="4"/><rect x="382" y="301" width="1" height="3"/><rect x="383" y="303" width="1" height="3"/><rect x="384" y="304" width="1" height="3"/><rect x="385" y="301" width="1" height="6"/><rect x="386" y="303" width="1" height="3"/><rect x="387" y="300" width="1" height="6"/><rect x="388" y="300" width="1" height="3"/><rect x="389" y="300" width="1" height="3"/><rect x="390" y="301" width="1" height="7"/><rect x="391" y="300" width="1" height="7"/><rect x="392" y="302" width="1" height="5"/><rect x="393" y="300" width="1" height="5"/><rect x="394" y="300" width="1" height="7"/><rect x="395" y="300" width="1" height="5"/><rect x="396" y="301" width="1" height="4"/><rect x="397" y="298" width="1" height="3"/><rect x="398" y="300" width="1" height="9"/><rect x="399" y="302" width="1" height="4"/><rect x="400" y="304" width="1" height="3"/><rect x="401" y="301" width="1" height="6"/><rect x="402" y="301" width="1" height="6"/><rect x="403" y="303" width="1" height="6"/><rect x="404" y="303" width="1" height="6"/><rect x="405" y="305" width="1" height="5"/><rect x="406" y="303" width="1" height="3"/><rect x="407" y="305" width="1" height="4"/><rect x="408" y="306" width="1" height="2"/><rect x="409" y="303" width="1" height="7"/><rect x="410" y="305" width="1" height="4"/><rect x="411" y="301" width="1" height="5"/><rect x="412" y="305" width="1" height="4"/><rect x="413" y="302" width="1" height="4"/><rect x="414" y="303" width="1" height="5"/><rect x="415" y="297" width="1" height="8"/><rect x="416" y="301" width="1" height="2"/><rect x="417" y="303" width="1" height="4"/><rect x="418" y="303" width="1" height="3"/><rect x="419" y="301" width="1" height="5"/><rect x="420" y="300" width="1" height="6"/><rect x="421" y="304" width="1" height="2"/><rect x="422" y="303" width="1" height="5"/><rect x="423" y="302" width="1" height="5"/><rect x="424" y="302" width="1" height="3"/><rect x="425" y="303" width="1" height="4"/><rect x="426" y="306" width="1" height="3"/><rect x="427" y="303" width="1" height="5"/><rect x="428" y="304" width="1" height="5"/><rect x="429" y="303" width="1" height="8"/><rect x="430" y="302" width="1" height="6"/><rect x="431" y="301" width="1" height="7"/><rect x="432" y="299" width="1" height="5"/><rect x="433" y="303" width="1" height="2"/><rect x="434" y="302" width="1" height="4"/><rect x="435" y="300" width="1" height="3"/><rect x="436" y="301" width="1" height="4"/><rect x="437" y="302" width="1" height="5"/><rect x="438" y="302" width="1" height="4"/><rect x="439" y="303" width="1" height="6"/><rect x="440" y="302" width="1" height="3"/><rect x="441" y="303" width="1" height="6"/><rect x="442" y="302" width="1" height="3"/><rect x="443" y="303" width="1" height="5"/><rect x="444" y="302" width="1" height="2"/><rect x="445" y="303" width="1" height="3"/></g>
<rect x="446" y="296" width="1" height="133" fill="#fff"/>
</svg>
<!-- axis labels chart 1 -->
<div class="ax axr" style="left:22px;top:126px">10</div>
<div class="ax axr" style="left:22px;top:153px">8</div>
<div class="ax axr" style="left:22px;top:180px">6</div>
<div class="ax axr" style="left:22px;top:206px">4</div>
<div class="ax axr" style="left:22px;top:233px">2</div>
<div class="ax" style="left:471px;top:126px">16</div>
<div class="ax" style="left:471px;top:143px">14</div>
<div class="ax" style="left:471px;top:160px">12</div>
<div class="ax" style="left:471px;top:177px">10</div>
<div class="ax" style="left:471px;top:193px">8</div>
<div class="ax" style="left:471px;top:210px">6</div>
<div class="ax" style="left:471px;top:227px">4</div>
<div class="ax" style="left:471px;top:244px">2</div>
<div class="ax axc" style="left:35px;top:270px">0.0</div>
<div class="ax axc" style="left:81px;top:270px">0.5</div>
<div class="ax axc" style="left:128px;top:270px">1.0</div>
<div class="ax axc" style="left:174px;top:270px">1.5</div>
<div class="ax axc" style="left:220px;top:270px">2.0</div>
<div class="ax axc" style="left:267px;top:270px">2.5</div>
<div class="ax axc" style="left:313px;top:270px">3.0</div>
<div class="ax axc" style="left:360px;top:270px">3.5</div>
<div class="ax axc" style="left:406px;top:270px">4.0</div>
<div class="ax axc" style="left:452px;top:270px">4.5</div>
<!-- axis labels chart 2 -->
<div class="ax axr" style="left:22px;top:288px">10</div>
<div class="ax axr" style="left:22px;top:315px">8</div>
<div class="ax axr" style="left:22px;top:342px">6</div>
<div class="ax axr" style="left:22px;top:368px">4</div>
<div class="ax axr" style="left:22px;top:395px">2</div>
<div class="ax" style="left:471px;top:288px">10</div>
<div class="ax" style="left:471px;top:315px">8</div>
<div class="ax" style="left:471px;top:342px">6</div>
<div class="ax" style="left:471px;top:368px">4</div>
<div class="ax" style="left:471px;top:395px">2</div>
<div class="ax axc" style="left:35px;top:432px">0.0</div>
<div class="ax axc" style="left:81px;top:432px">0.5</div>
<div class="ax axc" style="left:128px;top:432px">1.0</div>
<div class="ax axc" style="left:174px;top:432px">1.5</div>
<div class="ax axc" style="left:220px;top:432px">2.0</div>
<div class="ax axc" style="left:267px;top:432px">2.5</div>
<div class="ax axc" style="left:313px;top:432px">3.0</div>
<div class="ax axc" style="left:360px;top:432px">3.5</div>
<div class="ax axc" style="left:406px;top:432px">4.0</div>
<div class="ax axc" style="left:452px;top:432px">4.5</div>
<!-- Disk-Info group -->
<div class="grp" style="left:491px;top:126px;width:139px;height:84px"></div>
<div class="gl" style="left:498px;top:120px;padding:0 2px" id="g1">Disk-Info</div>
<div class="t" style="left:500px;top:135px;letter-spacing:-0.45px">Typ:</div><div class="t n" style="left:545px;top:135px;letter-spacing:-0.36px">DVD-R</div>
<div class="t" style="left:500px;top:152px;letter-spacing:-0.7px">ID:</div><div class="t n" style="left:545px;top:152px;letter-spacing:-0.48px">TYG01</div>
<div class="t" style="left:500px;top:170px;letter-spacing:-0.58px">Datum:</div><div class="t n" style="left:545px;top:170px" id="dat">13 Dec 2003</div>
<div class="t" style="left:500px;top:188px;letter-spacing:-0.42px">Label:</div><div class="t n" style="left:545px;top:188px">-</div>
<!-- Einstellungen group -->
<div class="grp" style="left:491px;top:217px;width:139px;height:204px"></div>
<div class="gl" style="left:498px;top:211px;padding:0 2px;letter-spacing:-0.2px" id="g2">Einstellungen</div>
<div class="t" style="left:500px;top:226px;letter-spacing:-0.25px" id="gesch">Geschwindigkeit:</div>
<div class="sunk" style="left:500px;top:242px;width:83px;height:21px"></div>
<div class="a sy" style="left:504px;top:246px">8 X</div>
<div class="btn" style="left:566px;top:244px;width:15px;height:17px"></div>
<svg class="a" style="left:570px;top:250px" width="7" height="4" viewBox="0 0 7 4" shape-rendering="crispEdges"><path d="M0 0H7L3.5 4Z" fill="#000"/></svg>
<div class="btn" style="left:592px;top:240px;width:23px;height:23px"></div>
<svg class="a" style="left:596px;top:243px" width="14" height="16" viewBox="0 0 14 16">
 <rect x="0.5" y="0.5" width="13" height="15" fill="#fff" stroke="#000" stroke-width="1"/>
 <path d="M3.3 7.6 V5.6 Q3.3 4.5 4.5 4.5 H7" fill="none" stroke="#008000" stroke-width="1.1" stroke-dasharray="2.2 0.6"/><path d="M6.2 2.2 L9.2 4.5 L6.2 6.8Z" fill="#008000"/>
 <path d="M10.6 8.2 V10.2 Q10.6 11.4 9.4 11.4 H7" fill="none" stroke="#008000" stroke-width="1.1" stroke-dasharray="2.2 0.6"/><path d="M7.8 9 L4.8 11.4 L7.8 13.8Z" fill="#008000"/>
</svg>
<div class="t" style="left:503px;top:273px;letter-spacing:-0.47px">Start:</div>
<div class="sunk" style="left:554px;top:268px;width:60px;height:19px"></div>
<div class="a sy" style="left:558px;top:271px;letter-spacing:-0.36px">0000 MB</div>
<div class="t" style="left:503px;top:295px;letter-spacing:-0.41px">Ende:</div>
<div class="sunk" style="left:554px;top:291px;width:60px;height:19px"></div>
<div class="a sy" style="left:558px;top:294px;letter-spacing:-0.36px">4397 MB</div>
<div class="cb" style="left:502px;top:316px"></div><div class="t" style="left:520px;top:316px;letter-spacing:-0.13px" id="c0">Schnelles Scannen</div>
<div class="cb" style="left:502px;top:337px"></div><div class="t" style="left:520px;top:337px;word-spacing:1.5px;letter-spacing:-0.25px">C1/PIE anzeigen</div>
<div class="cb" style="left:502px;top:353px"></div><div class="t" style="left:520px;top:353px;word-spacing:1.5px;letter-spacing:-0.26px">C2/PIF anzeigen</div>
<div class="cb" style="left:502px;top:370px"></div><div class="t" style="left:520px;top:370px;letter-spacing:-0.2px">Jitter anzeigen</div>
<div class="cb" style="left:502px;top:386px"></div><div class="t" style="left:520px;top:386px;width:107px;overflow:hidden" id="c4">Lesegeschwindigkeit anzeigen</div>
<div class="cb" style="left:502px;top:402px;background:#d4d0c8"></div><div class="t" style="left:520px;top:402px;width:107px;overflow:hidden;color:#808080;text-shadow:1px 1px 0 #fff" id="c5">Schreibgeschwindigkeit anzeigen</div>
<svg class="a" style="left:502px;top:337px" width="13" height="80" viewBox="0 0 13 80" shape-rendering="crispEdges">
 <g id="ck"><path d="M3 5v3l2 2l5-5v-3l-5 5z" fill="#000" transform="translate(0,0)"/></g>
 <path d="M3 5v3l2 2l5-5v-3l-5 5z" fill="#000" transform="translate(0,16)"/>
 <path d="M3 5v3l2 2l5-5v-3l-5 5z" fill="#000" transform="translate(0,33)"/>
 <path d="M3 5v3l2 2l5-5v-3l-5 5z" fill="#000" transform="translate(0,49)"/>
 <path d="M3 5v3l2 2l5-5v-3l-5 5z" fill="#808080" transform="translate(0,65)"/>
</svg>
<!-- Quality group -->
<div class="grp" style="left:491px;top:427px;width:139px;height:26px"></div>
<div class="t" style="left:502px;top:434px;letter-spacing:-0.3px" id="qi">Qualitätsindex:</div><div class="v" style="left:581px;width:40px;top:434px">99</div>
<!-- Progress group -->
<div class="grp" style="left:491px;top:459px;width:139px;height:57px"></div>
<div class="t" style="left:502px;top:468px;letter-spacing:-0.29px">Fortschritt:</div><div class="v" style="left:561px;width:60px;top:468px;letter-spacing:-0.5px">100 %</div>
<div class="t" style="left:502px;top:484px;letter-spacing:-0.3px">Position:</div><div class="v" style="left:561px;width:60px;top:484px;letter-spacing:-0.29px">4396 MB</div>
<div class="t" style="left:502px;top:499px;letter-spacing:-0.2px" id="ges2">Geschwindigkeit:</div><div class="v" style="left:561px;width:60px;top:499px;letter-spacing:-0.22px">8.30 X</div>
<!-- PI Errors -->
<div class="grp" style="left:14px;top:459px;width:146px;height:57px"></div>
<div class="gl" style="left:22px;top:453px;width:54px"></div>
<div class="sq" style="left:24px;top:456px;background:#0ff"></div>
<div class="t" style="left:35px;top:453px;letter-spacing:-0.4px" id="pe">PI Errors</div>
<div class="t" style="left:22px;top:469px;letter-spacing:-0.1px" id="ds1">Durchschnitt</div><div class="v" style="left:91px;width:60px;top:469px">1.55</div>
<div class="t" style="left:22px;top:484px;letter-spacing:-0.65px">Maximum:</div><div class="v" style="left:91px;width:60px;top:484px">10</div>
<div class="t" style="left:22px;top:499px;letter-spacing:-0.51px">Gesamt:</div><div class="v" style="left:91px;width:60px;top:499px">11974</div>
<!-- PI Failures -->
<div class="grp" style="left:172px;top:459px;width:146px;height:57px"></div>
<div class="gl" style="left:180px;top:453px;width:64px"></div>
<div class="sq" style="left:182px;top:456px;background:#ff0"></div>
<div class="t" style="left:193px;top:453px;letter-spacing:-0.33px" id="pf">PI Failures</div>
<div class="t" style="left:181px;top:469px;letter-spacing:-0.1px">Durchschnitt</div><div class="v" style="left:250px;width:60px;top:469px">0.00</div>
<div class="t" style="left:181px;top:484px;letter-spacing:-0.65px">Maximum:</div><div class="v" style="left:250px;width:60px;top:484px">1</div>
<div class="t" style="left:181px;top:499px;letter-spacing:-0.51px">Gesamt:</div><div class="v" style="left:250px;width:60px;top:499px">8</div>
<!-- Jitter -->
<div class="grp" style="left:331px;top:459px;width:147px;height:43px"></div>
<div class="gl" style="left:339px;top:453px;width:36px"></div>
<div class="sq" style="left:341px;top:456px;background:#f0f"></div>
<div class="t" style="left:352px;top:453px;letter-spacing:-0.3px" id="ji">Jitter</div>
<div class="t" style="left:340px;top:469px;letter-spacing:-0.1px">Durchschnitt</div><div class="v" style="left:409px;width:60px;top:469px;letter-spacing:-0.3px">8.63 %</div>
<div class="t" style="left:340px;top:484px;letter-spacing:-0.65px">Maximum:</div><div class="v" style="left:409px;width:60px;top:484px;letter-spacing:-0.25px">9.9 %</div>
<div class="t" style="left:340px;top:503px;letter-spacing:-0.3px" id="po">PO Ausfälle:</div><div class="v" style="left:409px;width:60px;top:503px">0</div>

</div>
</body></html>
